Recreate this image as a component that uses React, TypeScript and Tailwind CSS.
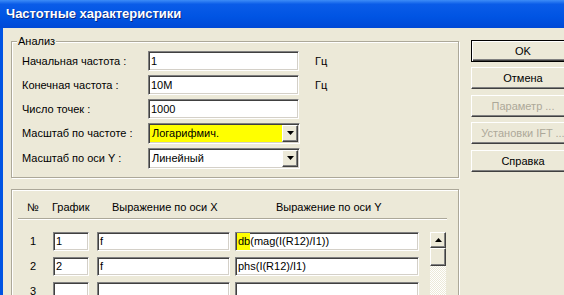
import clsx from 'clsx';
import type { ReactNode } from 'react';

// классическая "вдавленная" рамка поля ввода
const sunken =
  'border border-t-[#808080] border-l-[#808080] border-r-white border-b-white shadow-[inset_1px_1px_0_#404040,inset_-1px_-1px_0_#d4d0c8]';

// выпуклая кнопка
const raised =
  'border border-t-white border-l-white border-r-[#404040] border-b-[#404040] shadow-[inset_-1px_-1px_0_#808080]';

function TextField({ value, className, children }: { value?: string; className?: string; children?: ReactNode }) {
  return (
    <div className={clsx(sunken, 'shrink-0 bg-white flex items-center pl-[2px] overflow-hidden whitespace-nowrap', className)}>
      {children ?? value}
    </div>
  );
}

function Combo({ value, highlight }: { value: string; highlight?: boolean }) {
  return (
    <div
      className={clsx(
        sunken,
        'shrink-0 w-[152px] h-[21px] flex items-stretch p-[1px]',
        highlight ? 'bg-[#ffff00]' : 'bg-white',
      )}
    >
      <div className="flex-1 flex items-center pl-[2px]">{value}</div>
      <div className={clsx(raised, 'w-[16px] bg-[#ece9d8] flex items-center justify-center')}>
        <svg width="7" height="4" viewBox="0 0 7 4">
          <path d="M0 0h7L3.5 4z" fill="#000" />
        </svg>
      </div>
    </div>
  );
}

function Row({ label, children }: { label: string; children: ReactNode }) {
  return (
    <div className="flex items-center h-[24px]">
      <div className="w-[126px] shrink-0 whitespace-nowrap">{label}</div>
      {children}
    </div>
  );
}

function Button({ label, primary, disabled, className }: { label: string; primary?: boolean; disabled?: boolean; className?: string }) {
  return (
    <div
      className={clsx(
        'w-[104px] h-[22px] shrink-0 flex items-center justify-center bg-[#ece9d8]',
        primary
          ? 'border border-black shadow-[inset_1px_1px_0_#fff,inset_-1px_-1px_0_#404040,inset_-2px_-2px_0_#808080]'
          : raised,
        disabled ? 'text-[#aca899]' : 'text-black',
        className,
      )}
    >
      {label}
    </div>
  );
}

function GroupBox({ legend, className, children }: { legend?: string; className?: string; children: ReactNode }) {
  return (
    <div
      className={clsx(
        'relative shrink-0 border border-[#aca899] shadow-[inset_1px_1px_0_#fff,1px_1px_0_#fff]',
        className,
      )}
    >
      {legend && (
        <span className="absolute -top-[8px] left-[5px] px-[1px] bg-[#ece9d8] leading-[14px]">{legend}</span>
      )}
      {children}
    </div>
  );
}

const rows = [
  { n: '1', graph: '1', x: 'f', y: 'db' },
  { n: '2', graph: '2', x: 'f', y: 'phs(I(R12)/I1)' },
  { n: '3', graph: '', x: '', y: '' },
];

export default function App() {
  return (
    <div className="w-[564px] h-[295px] overflow-hidden flex flex-col bg-[#ece9d8] text-[11px] text-black font-['Liberation_Sans',Arial,sans-serif]">
      {/* заголовок окна */}
      <div className="h-[28px] shrink-0 flex items-center pl-[6px] bg-[linear-gradient(180deg,#3d8cf7_0%,#0a5ce8_15%,#0054e3_60%,#0049d6_100%)]">
        <span className="text-white font-bold text-[13px] [text-shadow:1px_1px_0_#0b2a84]">Частотные характеристики</span>
      </div>

      <div className="flex flex-1 min-h-0">
        <div className="w-[3px] shrink-0 bg-[#0054e3]" />
        <div className="flex-1 flex pl-[8px] pt-[13px]">
          <div className="w-[448px] shrink-0 flex flex-col">
            {/* Анализ */}
            <GroupBox legend="Анализ" className="h-[137px] pl-[10px] pt-[7px]">
              <Row label="Начальная частота :">
                <TextField value="1" className="w-[151px] h-[20px]" />
                <span className="ml-[16px]">Гц</span>
              </Row>
              <Row label="Конечная частота :">
                <TextField value="10M" className="w-[151px] h-[20px]" />
                <span className="ml-[16px]">Гц</span>
              </Row>
              <Row label="Число точек :">
                <TextField value="1000" className="w-[151px] h-[20px]" />
              </Row>
              <Row label="Масштаб по частоте :">
                <Combo value="Логарифмич." highlight />
              </Row>
              <div className="mt-[1px]">
                <Row label="Масштаб по оси Y :">
                  <Combo value="Линейный" />
                </Row>
              </div>
            </GroupBox>

            {/* Таблица выражений */}
            <GroupBox className="mt-[11px] h-[140px] pt-[9px]">
              <div className="flex items-center h-[16px] whitespace-nowrap">
                <span className="ml-[15px] w-[25px]">№</span>
                <span className="w-[60px]">График</span>
                <span className="w-[164px]">Выражение по оси X</span>
                <span>Выражение по оси Y</span>
              </div>
              <div className="mt-[3px] ml-[6px] w-[429px] h-[2px] border-t border-[#aca899] border-b border-b-white" />
              <div className="mt-[12px] flex">
                <div className="flex flex-col gap-[6px]">
                  {rows.map((r) => (
                    <div key={r.n} className="flex items-center h-[19px]">
                      <span className="ml-[18px] w-[23px] shrink-0">{r.n}</span>
                      <TextField value={r.graph} className="w-[36px] h-[19px]" />
                      <TextField value={r.x} className="ml-[8px] w-[133px] h-[19px]" />
                      <TextField className="ml-[5px] w-[184px] h-[19px]">
                        {r.n === '1' ? (
                          <>
                            <span className="bg-[#ffff00] -ml-[1px] pl-[1px]">db</span>
                            <span>(mag(I(R12)/I1))</span>
                          </>
                        ) : (
                          r.y
                        )}
                      </TextField>
                    </div>
                  ))}
                </div>
                {/* полоса прокрутки */}
                <div className="ml-[11px] w-[16px] shrink-0 flex flex-col h-[80px]">
                  <div className={clsx(raised, 'h-[16px] shrink-0 bg-[#ece9d8] flex items-center justify-center')}>
                    <svg width="7" height="4" viewBox="0 0 7 4">
                      <path d="M0 4h7L3.5 0z" fill="#000" />
                    </svg>
                  </div>
                  <div className={clsx(raised, 'h-[18px] shrink-0 bg-[#ece9d8]')} />
                  <div className="flex-1 bg-[repeating-conic-gradient(#ffffff_0%_25%,#ece9d8_0%_50%)] bg-[length:2px_2px]" />
                </div>
              </div>
            </GroupBox>
          </div>

          {/* кнопки */}
          <div className="ml-[12px] shrink-0 flex flex-col -mt-[1px]">
            <Button label="OK" primary />
            <Button label="Отмена" className="mt-[5px]" />
            <Button label="Параметр ..." disabled className="mt-[6px]" />
            <Button label="Установки IFT ..." disabled className="mt-[5px]" />
            <Button label="Справка" className="mt-[6px]" />
          </div>
        </div>
      </div>
    </div>
  );
}
